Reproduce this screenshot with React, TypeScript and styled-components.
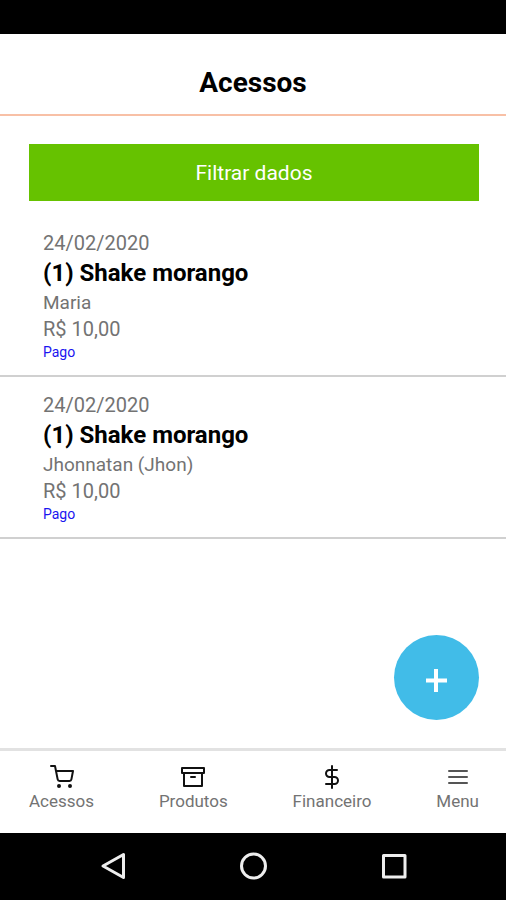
import React from 'react';
import styled, { createGlobalStyle } from 'styled-components';
import { FiShoppingCart, FiArchive, FiDollarSign, FiMenu } from 'react-icons/fi';

const GlobalStyle = createGlobalStyle`
  * { box-sizing: border-box; }
  body { margin: 0; background: #fff; font-family: Roboto, sans-serif; }
  button { font-family: inherit; border: 0; margin: 0; cursor: pointer; }
`;

const Screen = styled.div`
  min-height: 100vh;
  display: flex;
  flex-direction: column;
`;

const StatusBar = styled.div`
  height: 34px;
  background: #000;
`;

const Header = styled.header`
  padding: 31px 28px 13px;
  border-bottom: 2px solid #f8c0a6;
  text-align: center;
`;

const Title = styled.h1`
  margin: 0;
  font-size: 28px;
  line-height: 36px;
  font-weight: 700;
  color: #000;
`;

const Content = styled.main`
  flex: 1;
  display: flex;
  flex-direction: column;
`;

const FilterButton = styled.button`
  margin: 28px 27px 14px 29px;
  padding: 17px 16px 15px;
  background: #66c200;
  color: #fff;
  font-size: 21px;
  line-height: 25px;
`;

const List = styled.ul`
  margin: 0;
  padding: 0;
  list-style: none;
`;

const Item = styled.li`
  padding: 15px 43px 14px;
  border-bottom: 2px solid #d0d0d0;
`;

const Detail = styled.p<{ $size?: number }>`
  margin: 0;
  font-size: ${({ $size = 20 }) => $size}px;
  line-height: 27px;
  color: #737373;
`;

const Product = styled.h2`
  margin: 0;
  font-size: 24px;
  line-height: 32px;
  font-weight: 700;
  color: #000;
`;

const Status = styled.p`
  margin: 0;
  font-size: 14px;
  line-height: 18px;
  color: #1a14f0;
`;

const AddButton = styled.button`
  width: 85px;
  height: 85px;
  margin: auto 27px 28px auto;
  padding: 6px 0 0;
  border-radius: 50%;
  background: #41bce8;
  color: #fff;
  display: flex;
  align-items: center;
  justify-content: center;
`;

const TabBar = styled.nav`
  padding: 14px 27px 20px 29px;
  display: flex;
  justify-content: space-between;
  border-top: 3px solid #e2e2e2;
`;

const Tab = styled.a<{ $muted?: boolean }>`
  display: flex;
  flex-direction: column;
  align-items: center;
  color: #737373;
  font-size: 17px;
  line-height: 24px;
  text-decoration: none;

  svg { color: ${({ $muted }) => ($muted ? '#555' : '#111')}; }
`;

const SystemBar = styled.footer`
  padding: 19px 99px 20px;
  background: #000;
  display: flex;
  justify-content: space-between;
`;

const SystemButton = styled.button`
  padding: 0;
  background: transparent;
  color: #eee;
  display: flex;
`;

const entries = [
  { id: 1, date: '24/02/2020', product: '(1) Shake morango', client: 'Maria', price: 'R$ 10,00', status: 'Pago' },
  { id: 2, date: '24/02/2020', product: '(1) Shake morango', client: 'Jhonnatan (Jhon)', price: 'R$ 10,00', status: 'Pago' },
];

const tabs = [
  { label: 'Acessos', Icon: FiShoppingCart },
  { label: 'Produtos', Icon: FiArchive },
  { label: 'Financeiro', Icon: FiDollarSign },
  { label: 'Menu', Icon: FiMenu, muted: true },
];

function SystemIcon({ children }: { children: React.ReactNode }) {
  return (
    <svg width="28" height="28" viewBox="0 0 28 28" fill="none" stroke="currentColor" strokeWidth="3" strokeLinejoin="round" aria-hidden="true">
      {children}
    </svg>
  );
}

export default function App() {
  return (
    <Screen>
      <GlobalStyle />
      <StatusBar />
      <Header><Title>Acessos</Title></Header>
      <Content>
        <FilterButton type="button">Filtrar dados</FilterButton>
        <List>
          {entries.map((e) => (
            <Item key={e.id}>
              <Detail>{e.date}</Detail>
              <Product>{e.product}</Product>
              <Detail $size={19}>{e.client}</Detail>
              <Detail>{e.price}</Detail>
              <Status>{e.status}</Status>
            </Item>
          ))}
        </List>
        <AddButton type="button" aria-label="Adicionar">
          <svg width="23" height="23" viewBox="0 0 23 23" fill="none" stroke="currentColor" strokeWidth="4" aria-hidden="true">
            <path d="M11 0v23M1 11.5h21" />
          </svg>
        </AddButton>
      </Content>
      <TabBar>
        {tabs.map(({ label, Icon, muted }) => (
          <Tab key={label} href="#" $muted={muted}>
            <Icon size={24} />
            {label}
          </Tab>
        ))}
      </TabBar>
      <SystemBar>
        <SystemButton type="button" aria-label="Voltar">
          <SystemIcon><path d="M24.5 2.5v23L4 14z" /></SystemIcon>
        </SystemButton>
        <SystemButton type="button" aria-label="Início">
          <SystemIcon><circle cx="14.5" cy="14" r="12" /></SystemIcon>
        </SystemButton>
        <SystemButton type="button" aria-label="Recentes">
          <SystemIcon><rect x="4.5" y="3.5" width="21.5" height="21.5" /></SystemIcon>
        </SystemButton>
      </SystemBar>
    </Screen>
  );
}
